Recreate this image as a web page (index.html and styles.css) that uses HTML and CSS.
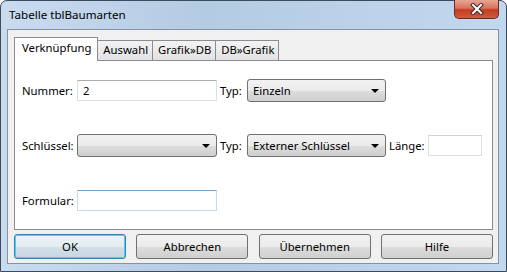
FILE: index.html
```html
<!DOCTYPE html>
<html lang="de">
  <head>
    <meta charset="UTF-8" />
    <title>Tabelle tblBaumarten</title>
    <link rel="stylesheet" href="styles.css">
  </head>
  <body>
    <div class="window">
      <!-- Titelleiste -->
      <div class="titlebar">
        <span class="title">Tabelle tblBaumarten</span>
        <button class="close" type="button">
          <svg width="18" height="12" viewBox="0 0 18 12">
            <path d="M5 2 L13 10 M13 2 L5 10" stroke="#3a2a2a" stroke-width="4" stroke-linecap="square" />
            <path d="M5 2 L13 10 M13 2 L5 10" stroke="#ffffff" stroke-width="2" stroke-linecap="square" />
          </svg>
        </button>
      </div>

      <div class="client">
        <div class="tabs">
          <div class="tab active">Verknüpfung</div>
          <div class="tab">Auswahl</div>
          <div class="tab">Grafik»DB</div>
          <div class="tab">DB»Grafik</div>
        </div>

        <div class="panel">
          <div class="fields">
            <label class="lbl">Nummer:</label>
            <div class="input">2</div>
            <label class="lbl lbl-typ">Typ:</label>
            <div class="select">Einzeln</div>
            <span></span>
            <span></span>

            <label class="lbl">Schlüssel:</label>
            <div class="select"></div>
            <label class="lbl lbl-typ">Typ:</label>
            <div class="select">Externer Schlüssel</div>
            <label class="lbl lbl-typ">Länge:</label>
            <div class="input light"></div>

            <label class="lbl">Formular:</label>
            <div class="input hover"></div>
          </div>
        </div>

        <div class="buttons">
          <button class="btn default" type="button">OK</button>
          <button class="btn" type="button">Abbrechen</button>
          <button class="btn" type="button">Übernehmen</button>
          <button class="btn" type="button">Hilfe</button>
        </div>
      </div>
    </div>
  </body>
</html>
```

FILE: styles.css
```css
* {
  box-sizing: border-box;
}

body {
  margin: 0;
  font-family: "Noto Sans", "Open Sans", sans-serif;
  font-size: 11.3px;
  color: #000;
  background: #fff;
}

.window {
  width: 507px;
  height: 272px;
  padding: 0 7px 7px 6px;
  border: 1px solid #3b4a5c;
  border-radius: 7px 7px 0 0;
  background: linear-gradient(90deg, #c9dbef 0%, #b4cbe4 40%, #c2d8ef 100%);
  display: flex;
  flex-direction: column;
}

.titlebar {
  height: 28px;
  display: flex;
  justify-content: space-between;
  align-items: flex-start;
}

.title {
  margin-top: 6px;
  padding-left: 2px;
  font-size: 11.6px;
  color: #000;
}

.close {
  width: 45px;
  height: 19px;
  margin-top: -1px;
  padding: 0;
  border: 1px solid #6b2a22;
  border-top: none;
  border-radius: 0 0 5px 5px;
  background: linear-gradient(#e9a593 0%, #d8735c 45%, #c43b22 55%, #d35a3c 100%);
  display: flex;
  justify-content: center;
  align-items: center;
}

.client {
  flex: 1;
  background-color: #f0f0f0;
  border: 1px solid #8593a5;
  padding: 7px 6px 0 6px;
}

.tabs {
  display: flex;
  align-items: flex-end;
  height: 23px;
}

.tab {
  height: 20px;
  padding: 0 4px 0 5px;
  border: 1px solid #898c95;
  border-bottom: none;
  border-left: none;
  background: linear-gradient(#f3f3f3, #e2e2e2);
  line-height: 18px;
  color: #000;
}

.tab.active {
  height: 24px;
  margin-bottom: -1px;
  padding: 0 6px 0 7px;
  border-left: 1px solid #898c95;
  background: #fff;
  line-height: 20px;
  position: relative;
}

.panel {
  width: 479px;
  height: 170px;
  background: #fff;
  border: 1px solid #898c95;
  padding: 18px 0 0 7px;
}

.fields {
  display: grid;
  grid-template-columns: 55px 140px 30px 139px 42px 54px;
  grid-auto-rows: 23px;
  row-gap: 32px;
  align-items: center;
}

.lbl-typ {
  padding-left: 3px;
}

.input {
  height: 21px;
  border: 1px solid #dbdfe6;
  border-top-color: #abadb3;
  background: #fff;
  padding: 0 5px;
  line-height: 19px;
}

.input.light {
  border-color: #dbdfe6;
  border-top-color: #cdd3db;
}

.input.hover {
  border-color: #c5daed;
  border-top-color: #7da2ce;
}

.select {
  position: relative;
  height: 23px;
  border: 1px solid #707070;
  border-radius: 3px;
  background: linear-gradient(#f2f2f2 0%, #ebebeb 50%, #dddddd 51%, #cfcfcf 100%);
  padding: 0 20px 0 5px;
  line-height: 21px;
}

.select::after {
  content: "";
  position: absolute;
  right: 6px;
  top: 9px;
  border-left: 4px solid transparent;
  border-right: 4px solid transparent;
  border-top: 4px solid #000;
}

.buttons {
  display: flex;
  justify-content: space-between;
  margin-top: 4px;
  width: 479px;
}

.btn {
  width: 112px;
  height: 25px;
  padding: 0;
  font-family: inherit;
  font-size: 11.3px;
  color: #000;
  border: 1px solid #707070;
  border-radius: 3px;
  background: linear-gradient(#f2f2f2 0%, #ebebeb 50%, #dddddd 51%, #cfcfcf 100%);
}

.btn.default {
  border-color: #3c7fb1;
  box-shadow: inset 0 0 0 1px #48d0f8;
  background: linear-gradient(#eef3f6 0%, #e3ecf1 50%, #d4e0e8 51%, #c6d6e1 100%);
}
```
